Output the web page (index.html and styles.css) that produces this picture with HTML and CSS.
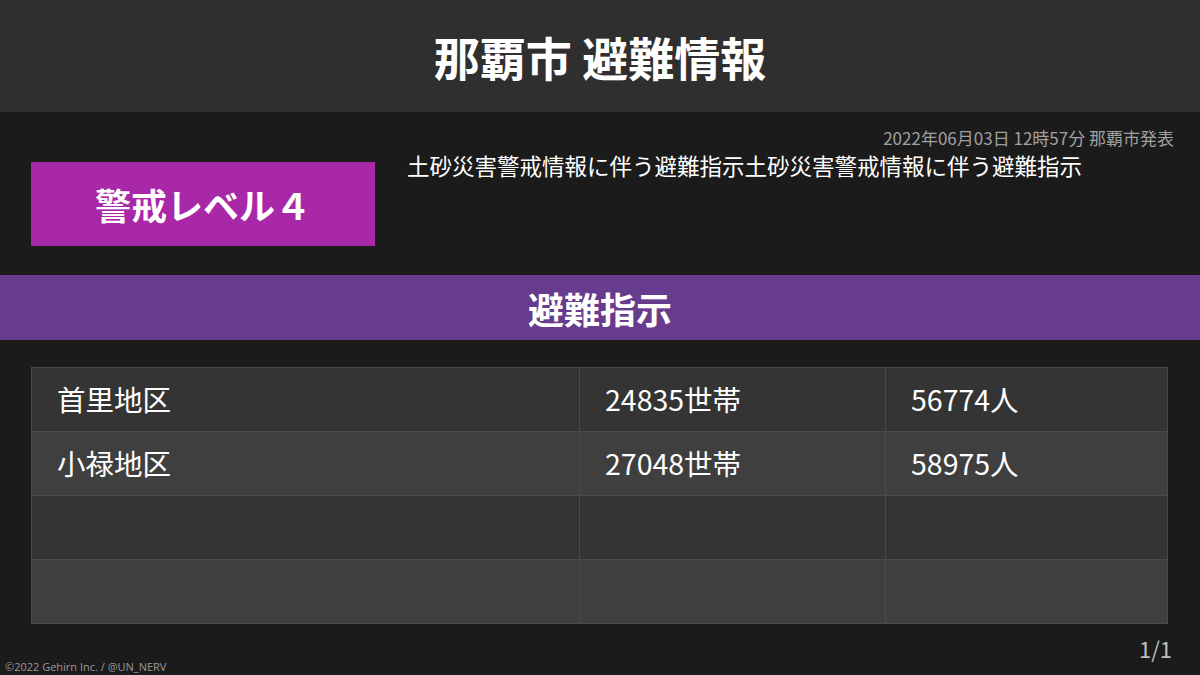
FILE: index.html
```html
<!DOCTYPE html>
<html lang="ja">
<head>
    <meta charset="UTF-8">
    <meta name="viewport" content="width=device-width, initial-scale=1.0">
    <title>那覇市 避難情報</title>
    <link rel="stylesheet" href="styles.css">
</head>
<body>
    <header class="header">
        <h1>那覇市 避難情報</h1>
    </header>

    <!-- 警戒レベルと発表内容 -->
    <section class="summary">
        <div class="level">警戒レベル４</div>
        <div class="info">
            <p class="stamp">2022年06月03日 12時57分 那覇市発表</p>
            <p class="desc">土砂災害警戒情報に伴う避難指示土砂災害警戒情報に伴う避難指示</p>
        </div>
    </section>

    <h2 class="band">避難指示</h2>

    <table class="areas">
        <tr>
            <td class="name">首里地区</td>
            <td class="homes">24835世帯</td>
            <td class="people">56774人</td>
        </tr>
        <tr>
            <td class="name">小禄地区</td>
            <td class="homes">27048世帯</td>
            <td class="people">58975人</td>
        </tr>
        <tr>
            <td class="name"></td>
            <td class="homes"></td>
            <td class="people"></td>
        </tr>
        <tr>
            <td class="name"></td>
            <td class="homes"></td>
            <td class="people"></td>
        </tr>
    </table>

    <footer class="footer">
        <span class="copy">©2022 Gehirn Inc. / @UN_NERV</span>
        <span class="page">1/1</span>
    </footer>
</body>
</html>
```

FILE: styles.css
```css
/* 1200x675 の避難情報パネル */
body {
    margin: 0;
    width: 1200px;
    height: 675px;
    overflow: hidden;
    display: flex;
    flex-direction: column;
    background-color: #1b1b1b;
    color: #ffffff;
    font-family: "Noto Sans CJK JP", "Noto Sans", sans-serif;
}

p, h1, h2 {
    margin: 0;
}

.header {
    height: 112px;
    display: flex;
    align-items: center;
    justify-content: center;
    background-color: #2f2f2f;
}

.header h1 {
    font-size: 46px;
    font-weight: bold;
    line-height: 1;
}

.summary {
    display: flex;
    gap: 32px;
    height: 163px;
    padding: 0 26px 0 31px;
}

.level {
    width: 344px;
    height: 84px;
    flex-shrink: 0;
    margin-top: 50px;
    display: flex;
    align-items: center;
    justify-content: center;
    background-color: #a928a8;
    font-size: 36px;
    font-weight: bold;
}

.info {
    flex: 1;
    padding-top: 14px;
}

.stamp {
    text-align: right;
    font-size: 17px;
    line-height: 24px;
    color: #a0a0a0;
}

.desc {
    margin-top: 0;
    font-size: 22.5px;
    line-height: 30px;
}

.band {
    height: 65px;
    display: flex;
    align-items: center;
    justify-content: center;
    background-color: #673b8d;
    font-size: 36px;
    font-weight: bold;
}

.areas {
    margin: 27px 0 0 31px;
    width: 1137px;
    border-collapse: collapse;
    table-layout: fixed;
    font-size: 28.5px;
}

.areas tr {
    height: 64px;
    background-color: #343434;
}

.areas tr:nth-child(even) {
    background-color: #3f3f3f;
}

.areas td {
    padding: 0 0 0 25px;
    border: 1px solid #4a4a4a;
    line-height: 1;
}

.name {
    width: 522px;
}

.homes {
    width: 280px;
}

.footer {
    flex: 1;
    display: flex;
    justify-content: space-between;
    align-items: flex-end;
    padding: 0 28px 0 5px;
}

.copy {
    font-family: "Open Sans", "Noto Sans", sans-serif;
    font-size: 11px;
    line-height: 16px;
    color: #9a9a9a;
}

.page {
    margin-bottom: 14px;
    font-size: 22px;
    line-height: 26px;
    color: #bdbdbd;
}
```
